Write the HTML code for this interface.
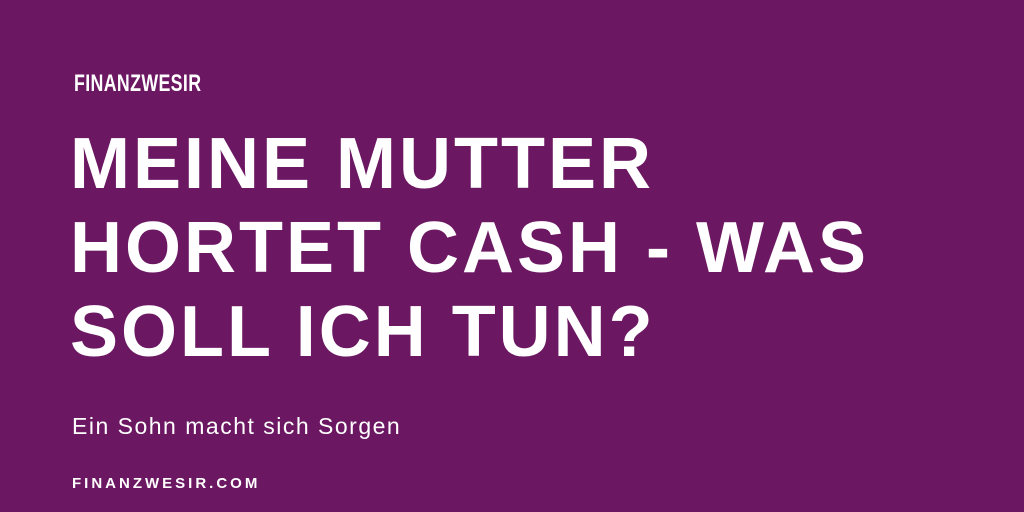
<!DOCTYPE html>
<html><head><meta charset="utf-8"><style>
html,body{margin:0;padding:0}
body{width:1024px;height:512px;background:#6b1762;position:relative;overflow:hidden;font-family:"Liberation Sans",sans-serif;color:#fff}
.logo{position:absolute;left:74px;top:70px;font-weight:bold;font-size:24px;transform:scaleX(0.74);transform-origin:left top;letter-spacing:0.5px}
.title{position:absolute;left:70px;top:122px;font-weight:bold;font-size:72px;line-height:84px;letter-spacing:3px;white-space:nowrap}
.sub{position:absolute;left:72px;top:413px;font-size:23px;letter-spacing:1.5px}
.foot{position:absolute;left:72px;top:475px;font-weight:bold;font-size:15px;letter-spacing:3px}
</style></head><body>
<div class="logo">FINANZWESIR</div>
<div class="title">MEINE MUTTER<br>HORTET CASH - WAS<br>SOLL ICH TUN?</div>
<div class="sub">Ein Sohn macht sich Sorgen</div>
<div class="foot">FINANZWESIR.COM</div>
</body></html>
